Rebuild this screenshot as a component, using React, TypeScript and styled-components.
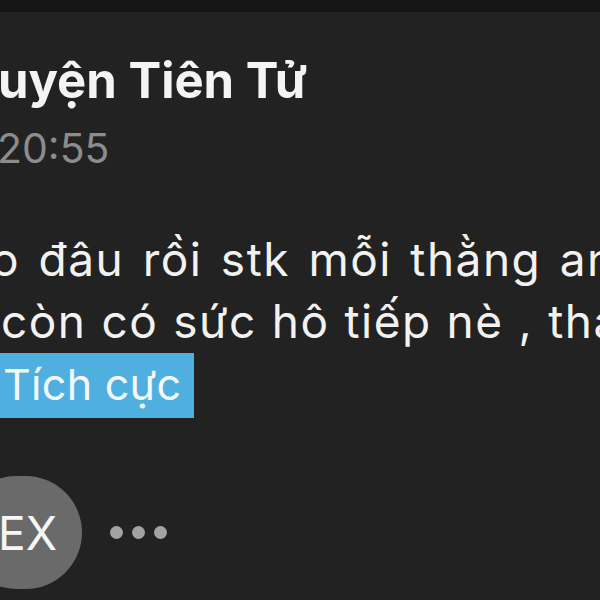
import React from "react";
import styled, { createGlobalStyle } from "styled-components";

const Global = createGlobalStyle`
  html, body { margin: 0; padding: 0; background: #222222; }
  body { font-family: Inter, "Noto Sans", "Liberation Sans", sans-serif; overflow: hidden; }
`;

const Screen = styled.div`
  width: 600px;
  height: 600px;
  background: #222222;
  display: flex;
  flex-direction: column;
  overflow: hidden;
`;

const TopBar = styled.div`
  height: 12px;
  background: #151515;
  flex-shrink: 0;
`;

const Content = styled.div`
  display: flex;
  flex-direction: column;
  padding-top: 39px;
`;

const Name = styled.div`
  font-size: 49px;
  line-height: 60px;
  font-weight: 700;
  color: #f4f4f4;
  white-space: nowrap;
  margin-left: -2px;
`;

const Time = styled.div`
  font-size: 41px;
  line-height: 50px;
  color: #8c8c8c;
  margin-top: 12px;
  margin-left: -3px;
  white-space: nowrap;
`;

const Message = styled.div`
  margin-top: 55px;
  font-size: 46px;
  line-height: 62px;
  letter-spacing: 1.5px;
  color: #f2f2f2;
`;

const Line = styled.div<{ $shift?: number; $ws?: number }>`
  white-space: nowrap;
  margin-left: ${(p) => p.$shift ?? 0}px;
  word-spacing: ${(p) => p.$ws ?? 0}px;
`;

const Tag = styled.span`
  display: inline-block;
  background: #4fb0e0;
  color: #f4f8fb;
  font-size: 43px;
  letter-spacing: 0.3px;
  padding: 0 13px 3px 3px;
  line-height: 62px;
`;

const Actions = styled.div`
  display: flex;
  align-items: center;
  gap: 28px;
  margin-top: 58px;
`;

const Pill = styled.div`
  height: 113px;
  border-radius: 57px;
  background: #6a6a6a;
  color: #f6f6f6;
  font-size: 46px;
  display: flex;
  align-items: center;
  margin-left: -40px;
  padding: 0 25px 0 38px;
`;

const Dots = styled.div`
  display: flex;
  gap: 9px;
`;

const Dot = styled.span`
  width: 13px;
  height: 13px;
  border-radius: 50%;
  background: #a3a3a3;
`;

export default function App() {
  return (
    <Screen>
      <Global />
      <TopBar />
      <Content>
        <Name>uyện Tiên Tử</Name>
        <Time>20:55</Time>
        <Message>
          <Line $shift={-9} $ws={4}>o đâu rồi stk mỗi thằng anh</Line>
          <Line $shift={1} $ws={0.5}>còn có sức hô tiếp nè , thánh</Line>
          <Line>
            <Tag>Tích cực</Tag>
          </Line>
        </Message>
        <Actions>
          <Pill>EX</Pill>
          <Dots>
            <Dot />
            <Dot />
            <Dot />
          </Dots>
        </Actions>
      </Content>
    </Screen>
  );
}
